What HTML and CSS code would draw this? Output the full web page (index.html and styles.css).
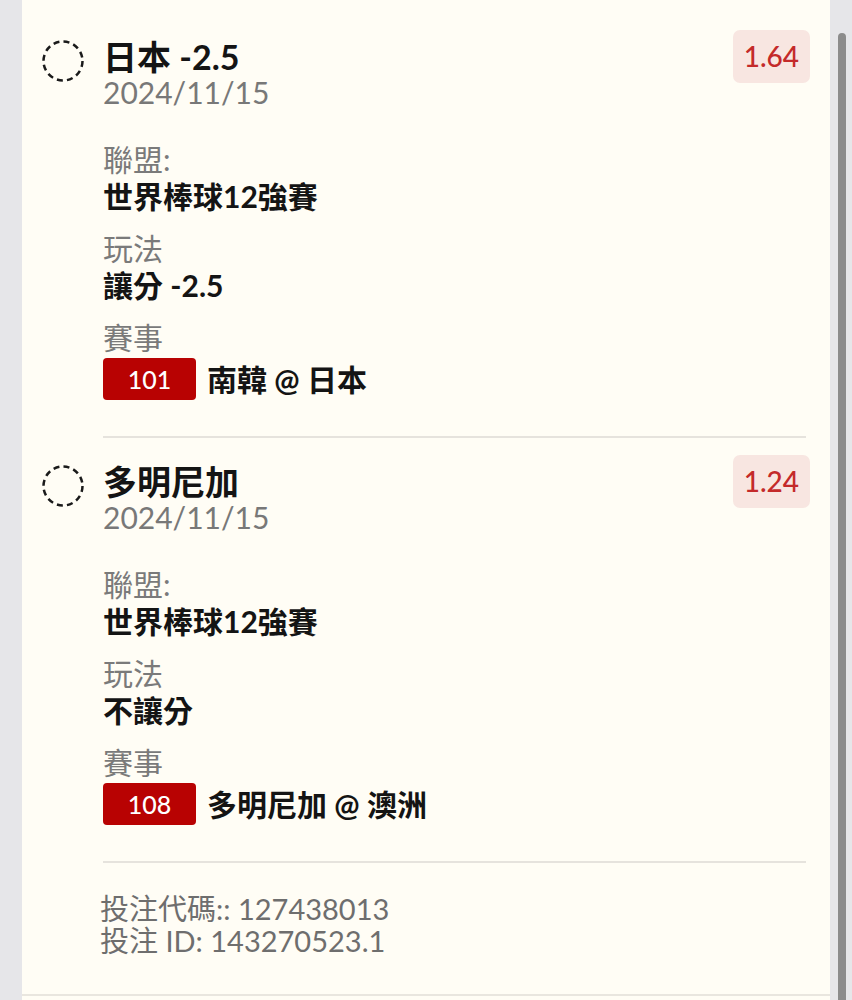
FILE: index.html
```html
<!DOCTYPE html>
<html>
<meta name="viewport" content="width=device-width, initial-scale=1.0">

<head>
  <title>Bet slip</title>
  <link rel="stylesheet" href="styles.css">
</head>

<body>

  <div class="page">
    <div class="slip">

      <!-- first leg -->
      <div class="leg">
        <div class="head">
          <svg class="check" width="42" height="42" viewBox="0 0 42 42">
            <circle cx="21" cy="21" r="19.5" fill="none" stroke="#1a1a1a" stroke-width="2.5" stroke-dasharray="6 4.2"/>
          </svg>
          <div class="head-text">
            <div class="pick">日本 -2.5</div>
            <div class="date">2024/11/15</div>
          </div>
          <div class="odds">1.64</div>
        </div>

        <div class="info">
          <div class="label">聯盟:</div>
          <div class="value">世界棒球12強賽</div>
          <div class="label">玩法</div>
          <div class="value">讓分 -2.5</div>
          <div class="label">賽事</div>
          <div class="match">
            <span class="code">101</span>
            <span class="teams">南韓 @ 日本</span>
          </div>
        </div>
      </div>

      <hr class="line">

      <!-- second leg -->
      <div class="leg">
        <div class="head">
          <svg class="check" width="42" height="42" viewBox="0 0 42 42">
            <circle cx="21" cy="21" r="19.5" fill="none" stroke="#1a1a1a" stroke-width="2.5" stroke-dasharray="6 4.2"/>
          </svg>
          <div class="head-text">
            <div class="pick">多明尼加</div>
            <div class="date">2024/11/15</div>
          </div>
          <div class="odds">1.24</div>
        </div>

        <div class="info">
          <div class="label">聯盟:</div>
          <div class="value">世界棒球12強賽</div>
          <div class="label">玩法</div>
          <div class="value">不讓分</div>
          <div class="label">賽事</div>
          <div class="match">
            <span class="code">108</span>
            <span class="teams">多明尼加 @ 澳洲</span>
          </div>
        </div>
      </div>

      <hr class="line">

      <div class="ids">
        <div>投注代碼:: 127438013</div>
        <div>投注 ID: 143270523.1</div>
      </div>
    </div>

    <div class="next"></div>
  </div>

  <div class="scroll">
    <div class="thumb"></div>
  </div>

</body>

</html>
```

FILE: styles.css
```css
* {
  box-sizing: border-box;
}

html,
body {
  height: 100%;
}

body {
  margin: 0;
  background-color: #e6e6e9;
  font-family: Lato, "Noto Sans CJK TC", sans-serif;
  color: #141414;
  display: flex;
  overflow: hidden;
}

.page {
  margin-left: 22px;
  width: 808px;
}

.slip {
  background-color: #fffdf5;
  padding: 30px 0 37px 0;
  border-bottom: 2px solid #e9e6df;
}

.next {
  background-color: #fffdf5;
  height: 40px;
}

/* header row: dashed circle, pick and odds */

.head {
  display: flex;
  align-items: flex-start;
}

.check {
  flex: none;
  margin: 10px 19px 0 20px;
}

.head-text {
  flex: 1;
  padding-top: 9px;
}

.pick {
  font-size: 34px;
  font-weight: 700;
  line-height: 36px;
}

.date {
  font-size: 30px;
  line-height: 34px;
  color: #787878;
}

.odds {
  flex: none;
  margin-right: 20px;
  height: 53px;
  line-height: 53px;
  padding: 0 11px;
  border-radius: 7px;
  background-color: #f8e6e1;
  color: #c42a2a;
  font-size: 28px;
  font-weight: 500;
}

/* details */

.info {
  padding: 32px 0 0 81px;
}

.label {
  font-size: 30px;
  line-height: 36px;
  color: #7a7a7a;
}

.value {
  font-size: 30px;
  line-height: 38px;
  font-weight: 700;
  margin-bottom: 15px;
}

.match {
  display: flex;
  align-items: center;
  height: 42px;
  margin-top: 3px;
}

.code {
  width: 93px;
  height: 42px;
  line-height: 42px;
  text-align: center;
  background-color: #b80202;
  color: #ffffff;
  border-radius: 4px;
  font-size: 25px;
  font-weight: 500;
}

.teams {
  margin-left: 11px;
  font-size: 30px;
  line-height: 38px;
  font-weight: 700;
}

.line {
  border: none;
  height: 2px;
  background-color: #e6e3dd;
  margin: 36px 24px 17px 81px;
}

.ids {
  padding: 13px 0 0 78px;
  font-size: 29px;
  line-height: 32px;
  color: #6e6e6e;
}

/* fake scrollbar */

.scroll {
  flex: 1;
}

.thumb {
  margin: 33px 0 0 8px;
  width: 8px;
  height: 100%;
  background-color: #8c8c8c;
  border-radius: 4px 4px 0 0;
}
```
